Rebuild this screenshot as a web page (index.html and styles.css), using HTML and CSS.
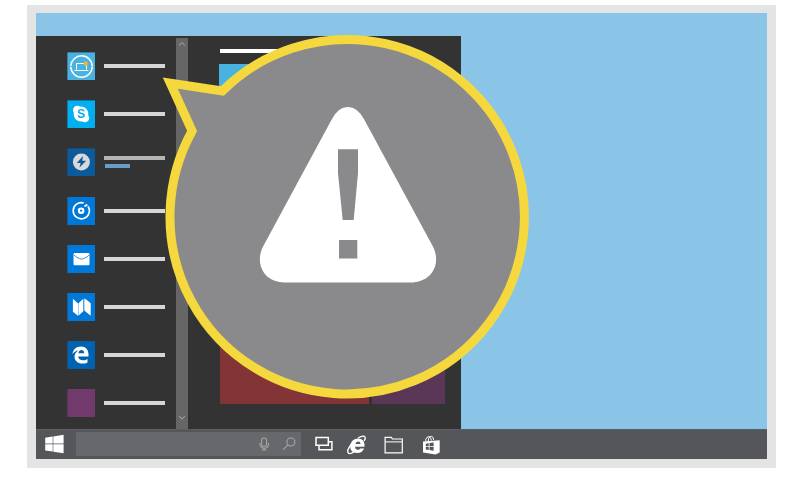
FILE: index.html
```
<!DOCTYPE html>
<html lang="en">
<head>
<meta charset="utf-8">
<title>Start menu warning</title>
<link rel="stylesheet" href="styles.css">
</head>
<body>
<div class="monitor">
  <div class="desktop">
    <div class="start-menu">
      <ul class="apps">
        <li class="app">
          <svg class="app-icon" viewBox="0 0 28 28"><rect class="c-sky" x=".4" y=".4" width="27.6" height="27.6"/><circle cx="14.5" cy="14.5" r="10.7" fill="none" stroke="#fff" stroke-width="1.5" stroke-dasharray="32.6 1" stroke-dashoffset="-.5"/><path d="M9.5 17.5V11.5H19.5V17.5M7.5 18.5H21.5" fill="none" stroke="#fff" stroke-width="1"/><circle cx="18.8" cy="11.5" r="2.2" fill="#f0b429"/></svg>
          <span class="line"></span>
        </li>
        <li class="app">
          <svg class="app-icon" viewBox="0 0 28 28"><rect class="c-skype" x=".4" y=".4" width="27.6" height="27.6"/><circle cx="14" cy="14" r="7.4" fill="#fff"/><circle cx="10.3" cy="10" r="4.3" fill="#fff"/><circle cx="17.9" cy="18" r="4.3" fill="#fff"/><text class="skype-s" x="14.1" y="18.3">S</text></svg>
          <span class="line"></span>
        </li>
        <li class="app">
          <svg class="app-icon" viewBox="0 0 28 28"><rect class="c-bolt" x=".4" y=".4" width="27.6" height="27.6"/><circle cx="14.4" cy="14" r="8.5" fill="#d9d9db"/><path d="M16 8 9.8 14.9H13.6L12.5 19.5 19.2 12.8H15.2Z" fill="#0a5a9c"/></svg>
          <span class="line line-dim"><span class="progress"></span></span>
        </li>
        <li class="app">
          <svg class="app-icon" viewBox="0 0 28 28"><rect class="c-blue" width="28" height="28" x=".4"/><path d="M16.7 6A8.1 8.1 0 1 0 21 9.2" fill="none" stroke="#fff" stroke-width="1.6"/><path d="M17.4 9.6 20.3 7.6" stroke="#fff" stroke-width="1.8"/><circle cx="14.1" cy="13.7" r="2.2" fill="none" stroke="#fff" stroke-width="2.2"/></svg>
          <span class="line"></span>
        </li>
        <li class="app">
          <svg class="app-icon" viewBox="0 0 28 28"><rect class="c-blue" x=".4" width="28" height="28"/><rect x="6.5" y="8" width="16" height="12.3" rx="1.2" fill="#fff"/><path d="M6.7 9.8Q9.2 12.4 12.2 13.5Q14.4 14.8 16.7 13.5Q20.2 12.4 22.4 9.8" fill="none" stroke="#0078d7" stroke-width=".8"/></svg>
          <span class="line"></span>
        </li>
        <li class="app">
          <svg class="app-icon" viewBox="0 0 28 28"><rect class="c-blue" x=".4" width="28" height="28"/><path d="M5.9 5.8 11 10.5V22.7L5.9 18.7ZM11.4 10.2 16.3 5.8V18.2L11.4 22.7ZM17.3 5.5 19.6 6.8 23.7 10.3V22.7L18.5 18.5 17.3 17.5Z" fill="#fff"/></svg>
          <span class="line"></span>
        </li>
        <li class="app">
          <svg class="app-icon" viewBox="0 0 28 28"><rect class="c-edge" x=".4" width="28" height="28"/><path d="M5.4 13.2C6.2 8.2 9.4 5.5 13.8 5.5C18.8 5.5 21.5 9 21.5 13.2V15.5H11.2C11.5 18.4 13.9 19.3 16.2 19.3C17.8 19.3 19.4 18.8 20.5 18V21.4C19 22.2 17.1 22.6 15.3 22.6C10.7 22.6 7.5 19.7 7.5 15.8C7.5 13 8.9 10.7 11.3 9.4C9 9.6 6.9 11 5.4 13.2ZM11.4 12.3H17.2C17.2 10.1 16.1 9 14.5 9C12.8 9 11.7 10.2 11.4 12.3Z" fill="#fff" fill-rule="evenodd"/></svg>
          <span class="line"></span>
        </li>
        <li class="app">
          <svg class="app-icon" viewBox="0 0 28 28"><rect class="c-plum" x=".4" width="28" height="28"/></svg>
          <span class="line"></span>
        </li>
      </ul>
      <div class="scrollbar">
        <svg viewBox="0 0 12 12"><path d="M3.2 7.6 6 4.4 8.8 7.6"/></svg>
        <svg viewBox="0 0 12 12"><path d="M3.2 3 6 6.2 8.8 3"/></svg>
      </div>
      <div class="pane">
        <div class="heading"></div>
        <div class="tiles">
          <div class="tile tile-sky"></div>
          <div class="tile tile-red"></div>
          <div class="tile tile-plum"></div>
        </div>
      </div>
    </div>
    <div class="taskbar">
      <svg class="windows" viewBox="0 0 20 20"><path d="M1.2 3.7 8.7 2.5V9.6H1.2ZM9.3 2.4 19.6.8V9.6H9.3ZM1.2 10.3H8.7V17.6L1.2 16.6ZM9.3 10.3H19.6V19.3L9.3 17.7Z" fill="#fff"/></svg>
      <div class="search">
        <svg viewBox="0 0 12 16"><rect x="3.6" y="2" width="5" height="8.5" rx="2.5"/><path d="M2 7V8.5Q2.3 12 6.2 12.3Q10.3 12 10.5 8.5V7M6.2 12.3V14M3.8 14H8.4"/></svg>
        <svg class="magnifier" viewBox="0 0 14 16"><circle cx="8.9" cy="6" r="4"/><path d="M6 8.9 1 13.7"/></svg>
      </div>
      <div class="tasks">
        <svg width="20" height="18" viewBox="0 0 20 18"><path d="M2 2.5H14.3V10.3H2Z M14.8 6.7H17.9V14.7H5V11" fill="none" stroke="#fff" stroke-width="1.5"/></svg>
        <svg class="browser" width="22" height="24" viewBox="0 0 22 24"><path d="M4.2 14.6C4.6 9.2 8 6.5 12.1 6.5C16.5 6.5 19 9.3 18.5 14.7H9.1C9 16.7 10.2 17.7 11.8 17.7C13 17.7 13.8 17.1 14.2 16.4H18.1C16.8 19.4 14.5 21 11.2 21C6.8 21 4 18.8 4.2 14.6ZM9.5 12H14.5C14.5 10.4 13.7 9.5 12.3 9.5C10.9 9.5 9.9 10.4 9.5 12Z" fill="#fff" fill-rule="evenodd"/><path d="M12 6C15.5 4 18.2 3.8 18.9 5C19.5 6 19 7.6 18.2 9M5 12.7C2 16.5 1.1 19.7 2.4 21.1C3.5 22.2 6 21.2 8.5 19.5M4.7 12.8Q7 9.4 11.5 7.3" fill="none" stroke="#fff" stroke-width="1.4"/></svg>
        <svg width="20" height="20" viewBox="0 0 20 20"><path d="M1.1 18.9V3.3H7.3L8.5 5H18.3V18.9Z" fill="none" stroke="#fff" stroke-width="1.2"/><path d="M1.5 7.9H18" stroke="#fff" stroke-width="1"/></svg>
        <svg width="20" height="22" viewBox="0 0 20 22"><path d="M3 8.5 19.7 7.2V19.5L15.5 21.6 3 19.6Z" fill="#fff"/><path d="M5.8 8V6.2Q6.8 3.6 8.8 3.6Q11 3.8 11.4 7.5M8.4 8V5.8Q9.3 3.2 11.4 3.3Q13.4 3.6 13.7 7" fill="none" stroke="#fff" stroke-width="1"/><path d="M5.8 10.7 8.7 10.2V13.2H5.8ZM9.5 10.1 13.6 9.5V13.2H9.5ZM5.8 14.1H8.7V17L5.8 16.5ZM9.5 14.1H13.6V17.7L9.5 17.1Z" fill="#55565a"/></svg>
      </div>
    </div>
  </div>
</div>
<svg class="callout" viewBox="0 0 380 380">
  <path class="bubble" d="M72.3 61A177.2 177.2 0 1 1 42.1 101L20.3 53.1Z"/>
  <path d="M181.7 89.5Q188 77 197.8 77T214.2 89.5L283.2 217C291 233 283 252.5 260 252.5H135C113 252.5 105 233 112.8 217Z" fill="#fff"/>
  <path d="M188 119.3H208V143.3L203.7 190H192.7L188 143.3ZM189 210H207.3V228.6H189Z" fill="#8a8a8c"/>
</svg>
</body>
</html>
```
FILE: styles.css
```
* { box-sizing: border-box; }

body {
  margin: 0;
  width: 800px;
  height: 480px;
  overflow: hidden;
  background: #fff;
  font-family: "Liberation Sans", sans-serif;
}

svg { display: block; flex: none; }

.monitor {
  width: 749px;
  height: 463.5px;
  margin: 4.5px 0 0 27px;
  padding: 8.5px 9px;
  background: #e4e4e4;
}

.desktop {
  height: 446px;
  padding-top: 22.5px;
  display: flex;
  flex-direction: column;
  background: #8ac5e8;
}

.start-menu {
  width: 425px;
  height: 393px;
  display: flex;
  background: #333;
}

.apps {
  width: 140px;
  margin: 0;
  padding: 16.6px 0 0 31px;
  list-style: none;
}

.app {
  height: 48.2px;
  display: flex;
  gap: 9px;
}

.app-icon { width: 28px; height: 28px; }

.line {
  width: 61px;
  height: 4px;
  margin-top: 12px;
  background: #d6d5d7;
}

.line-dim { margin-top: 8px; background: #b4b3b5; }

.progress {
  display: block;
  width: 25px;
  height: 4px;
  margin: 8px 0 0 1px;
  background: #689dc8;
}

.c-sky { fill: #48b2e0; }
.c-skype { fill: #00aff0; }
.c-bolt { fill: #0a5a9c; }
.c-blue { fill: #0078d7; }
.c-edge { fill: #0063b1; }
.c-plum { fill: #72396d; }

.skype-s {
  font-size: 12px;
  font-weight: bold;
  text-anchor: middle;
  fill: #00aff0;
}

.scrollbar {
  width: 12px;
  margin-top: 2px;
  padding-bottom: 4px;
  display: flex;
  flex-direction: column;
  justify-content: space-between;
  background: #666;
}

.scrollbar path { fill: none; stroke: #aaa; stroke-width: 1; }

.pane { width: 257px; padding: 13px 0 0 31px; }

.heading {
  width: 100px;
  height: 4px;
  margin-left: 1px;
  background: #fff;
}

.tiles {
  width: 226px;
  height: 340.5px;
  margin-top: 11px;
  display: grid;
  grid-template-columns: 150px 73px;
  grid-template-rows: 1fr 74px;
  column-gap: 3px;
  row-gap: 120px;
}

.tile-sky { grid-column: 1; background: #48b2e0; }
.tile-red { grid-row: 2; margin-left: 1px; background: #833436; }
.tile-plum { grid-row: 2; background: #5a3757; }

.taskbar {
  flex: 1;
  display: flex;
  align-items: center;
  background: #55565a;
  border-top: 1px solid #5a5f66;
}

.windows { width: 20px; height: 20px; margin-left: 8px; }

.search {
  width: 225px;
  height: 24px;
  margin-left: 12px;
  padding-right: 5px;
  display: flex;
  align-items: center;
  justify-content: flex-end;
  gap: 12px;
  background: #67686b;
}

.search svg { width: 12px; height: 16px; fill: none; stroke: #a6a6a8; stroke-width: 1.1; }
.search .magnifier { width: 14px; }

.tasks {
  margin-left: 13px;
  display: flex;
  align-items: center;
  gap: 16px;
}

.browser { margin-left: -4px; }

/* The warning bubble floats over the desktop. */
.callout {
  position: absolute;
  left: 150px;
  top: 30px;
  width: 380px;
  height: 380px;
}

.bubble {
  fill: #8a8a8c;
  stroke: #f5d83d;
  stroke-width: 9;
  stroke-miterlimit: 10;
}
```
